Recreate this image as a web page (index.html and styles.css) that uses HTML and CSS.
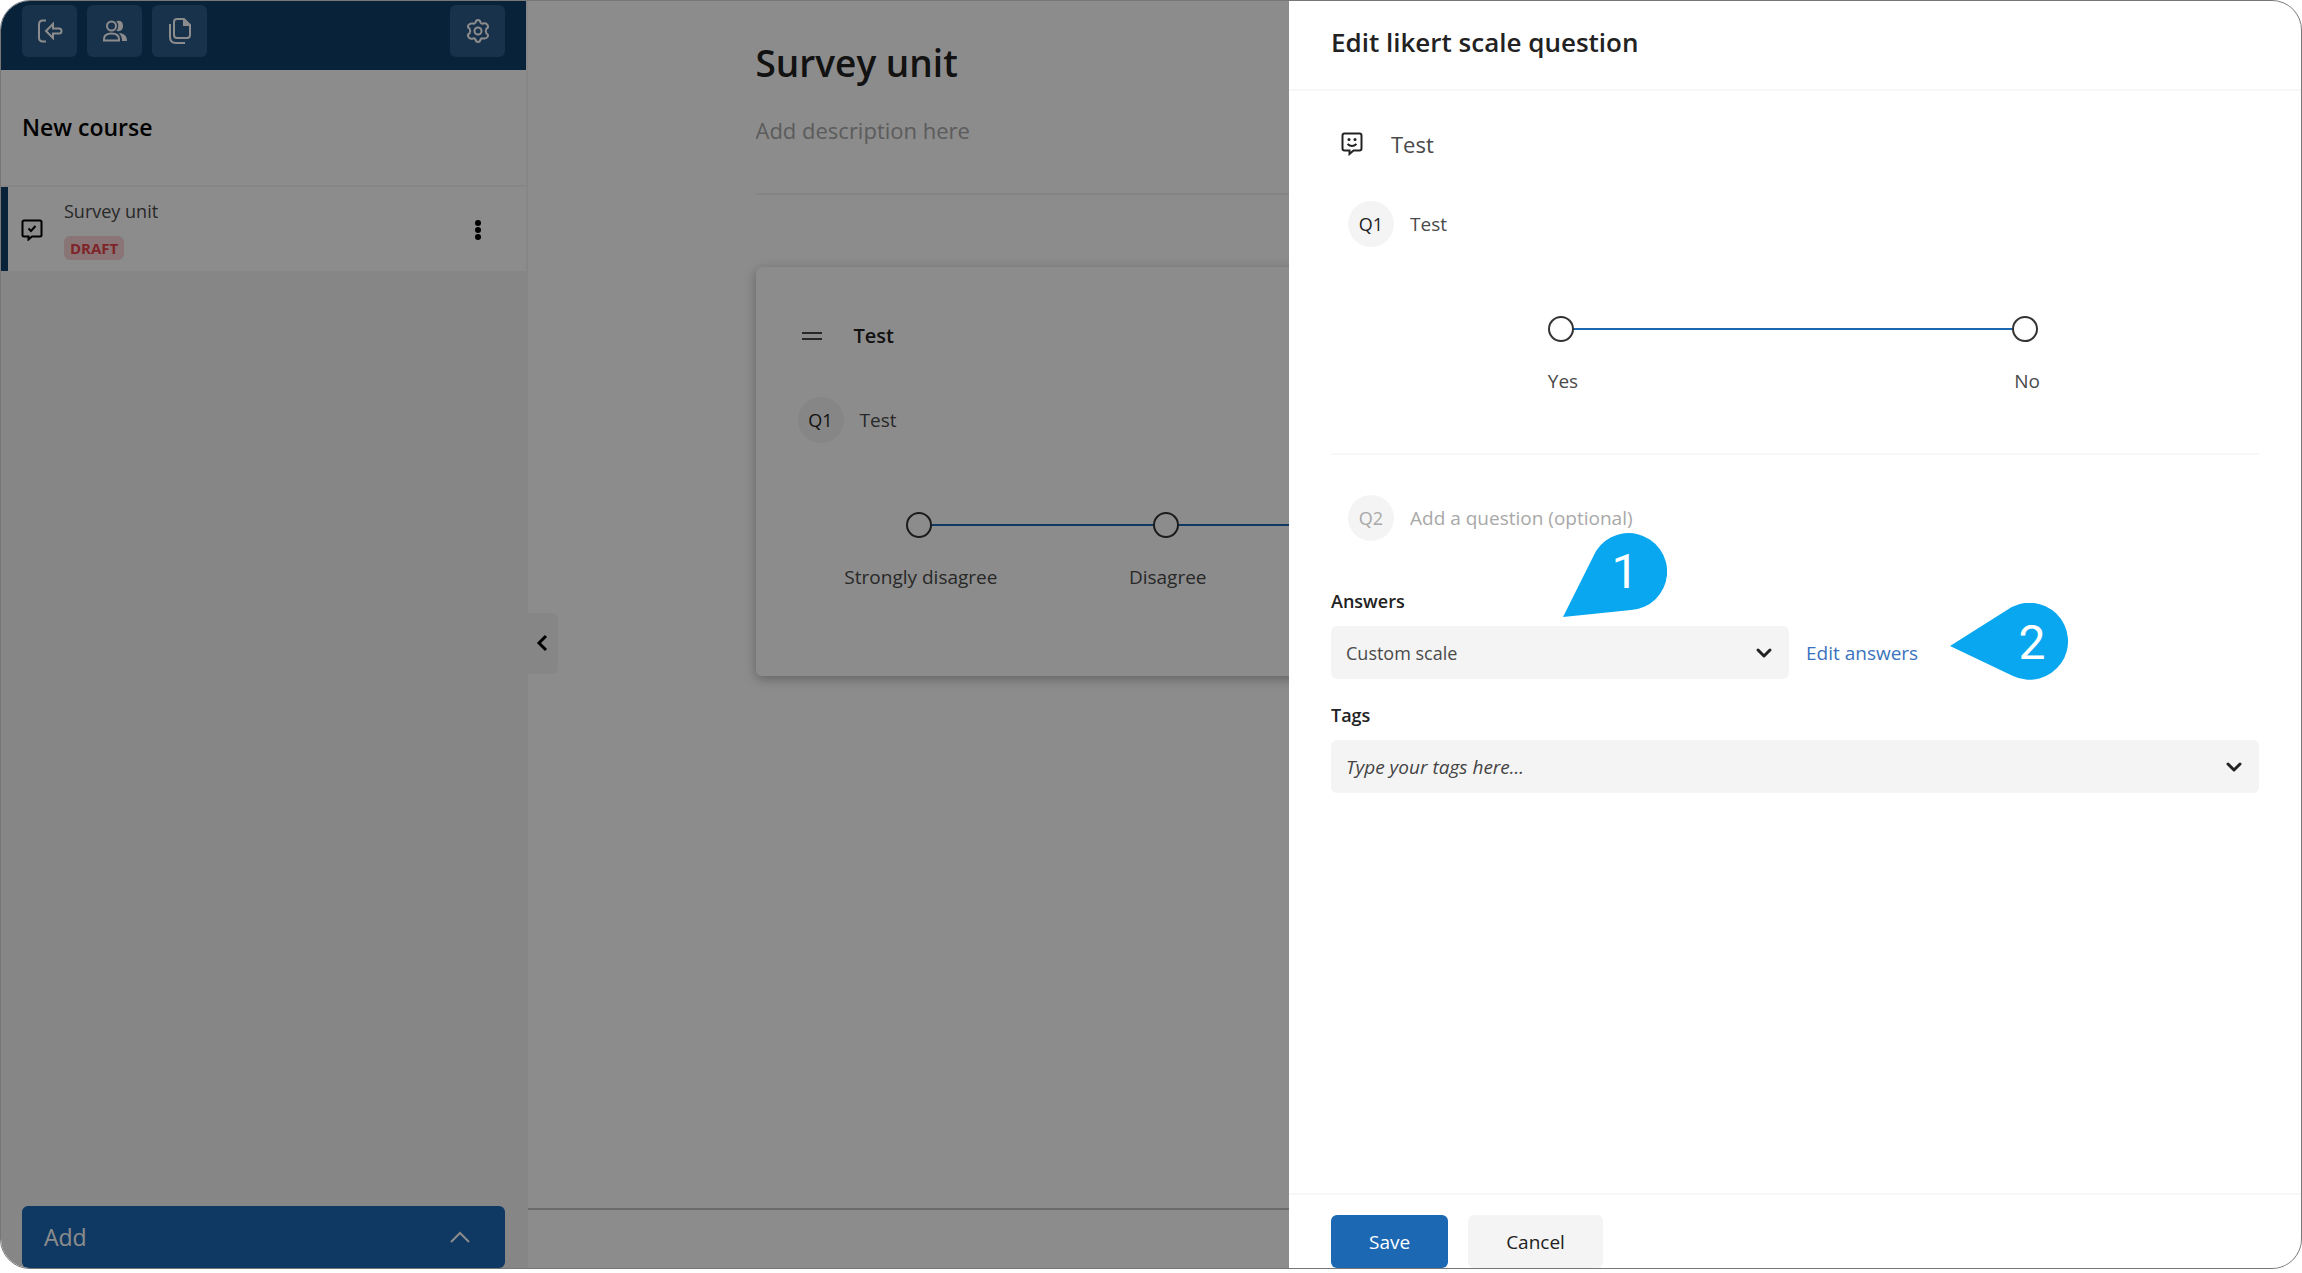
FILE: index.html
```html
<!DOCTYPE html>
<html lang="en">
<head>
    <meta charset="UTF-8">
    <meta name="viewport" content="width=device-width, initial-scale=1.0">
    <title>Survey unit - Edit likert scale question</title>
    <link rel="stylesheet" href="styles.css">
</head>
<body>
    <div class="window">
        <!-- Sidebar -->
        <aside class="sidebar">
            <nav class="toolbar">
                <button class="tool-btn" aria-label="Back">
                    <svg width="26" height="24" viewBox="0 0 26 24">
                        <path d="M9 1.500H6Q2 1.500 2 5.500V18.500Q2 22.500 6 22.500H9"/>
                        <path d="M9 12L16 5V9.500H22Q24.500 9.500 24.500 12T22 14.500H16V19Z"/>
                    </svg>
                </button>
                <button class="tool-btn" aria-label="Users">
                    <svg width="26" height="24" viewBox="0 0 26 24">
                        <circle cx="9.500" cy="7" r="4.500"/>
                        <path d="M2 21.500V20Q2 14.500 9.500 14.500T17 20V21.500Z"/>
                        <path class="solid" d="M14.500 2Q21 1 21 7T14.500 12Q18 7 14.500 2ZM18 14Q25 15 25 22H20Q20 17 17 14Z"/>
                    </svg>
                </button>
                <button class="tool-btn" aria-label="Files">
                    <svg width="24" height="28" viewBox="0 0 24 28">
                        <path d="M9 2H16L22 8V18Q22 21 19 21H9Q6 21 6 18V5Q6 2 9 2Z"/>
                        <path class="solid" d="M15 2L22 9H15Z"/>
                        <path d="M2 7V20Q2 26 8 26H17"/>
                    </svg>
                </button>
                <button class="tool-btn tool-btn-last" aria-label="Settings">
                    <svg width="24" height="26" viewBox="0 0 24 26">
                        <path d="M9.500 4.500Q10 2 12 2T14.500 4.500Q15 6 17 5.500Q20 4.500 21.500 7T20.500 10.500Q19 13 20.500 15.500Q23 17 21.500 19T17 20.500Q15 20 14.500 21.500Q14 24 12 24T9.500 21.500Q9 20 7 20.500Q4 21.500 2.500 19T3.500 15.500Q5 13 3.500 10.500Q1 9 2.500 7T7 5.500Q9 6 9.500 4.500Z"/>
                        <circle cx="12" cy="13" r="3.500"/>
                    </svg>
                </button>
            </nav>
            <h2 class="course-title">New course</h2>
            <div class="unit">
                <svg class="unit-icon" width="22" height="22" viewBox="0 0 22 22">
                    <path d="M3 1.500H19Q20.500 1.500 20.500 3V16Q20.500 17.500 19 17.500H11L7.500 20.500V17.500H3Q1.500 17.500 1.500 16V3Q1.500 1.500 3 1.500ZM7.500 9.500L10 12L14.500 7"/>
                </svg>
                <div class="unit-info">
                    <a class="unit-name" href="#">Survey unit</a>
                    <span class="badge">DRAFT</span>
                </div>
                <button class="more-btn" aria-label="More">
                    <svg width="6" height="20" viewBox="0 0 6 20">
                        <circle cx="3" cy="3" r="3"/>
                        <circle cx="3" cy="10" r="3"/>
                        <circle cx="3" cy="17" r="3"/>
                    </svg>
                </button>
            </div>
            <button class="add-btn">
                Add
                <svg width="20" height="12" viewBox="0 0 20 12"><path d="M1 11L10 2L19 11"/></svg>
            </button>
        </aside>

        <!-- Unit editor -->
        <main class="editor">
            <button class="collapse-btn" aria-label="Collapse sidebar">
                <svg width="12" height="18" viewBox="0 0 12 18"><path d="M10 2L3 9L10 16"/></svg>
            </button>
            <div class="editor-content">
                <h1 class="unit-title">Survey unit</h1>
                <input class="unit-description" type="text" placeholder="Add description here" aria-label="Description">
                <section class="card">
                    <div class="card-title">
                        <svg width="20" height="10" viewBox="0 0 20 10"><path d="M0 2H20M0 8H20"/></svg>
                        <h3>Test</h3>
                    </div>
                    <div class="question">
                        <span class="number">Q1</span>
                        <span>Test</span>
                    </div>
                    <ol class="scale">
                        <li><span class="dot"></span>Strongly disagree</li>
                        <li><span class="dot"></span>Disagree</li>
                        <li><span class="dot"></span>Neutral</li>
                        <li><span class="dot"></span>Agree</li>
                        <li><span class="dot"></span>Strongly agree</li>
                    </ol>
                </section>
            </div>
            <div class="editor-footer"></div>
        </main>

        <div class="overlay"></div>

        <!-- Edit question drawer -->
        <form class="drawer">
            <header class="drawer-header">
                <h2>Edit likert scale question</h2>
            </header>
            <div class="drawer-body">
                <div class="drawer-title">
                    <svg width="22" height="24" viewBox="0 0 22 24">
                        <path d="M3.500 1.500H18.500Q20.500 1.500 20.500 3.500V16.500Q20.500 18.500 18.500 18.500H12.500L8.500 22V18.500H3.500Q1.500 18.500 1.500 16.500V3.500Q1.500 1.500 3.500 1.500ZM6.500 12Q11 16 15.500 12"/>
                        <circle class="eye" cx="8" cy="7.500" r="1.500"/>
                        <circle class="eye" cx="14" cy="7.500" r="1.500"/>
                    </svg>
                    <input type="text" value="Test" aria-label="Title">
                </div>
                <div class="question">
                    <label class="number" for="q1">Q1</label>
                    <input type="text" id="q1" value="Test">
                </div>
                <ol class="scale">
                    <li><span class="dot"></span>Yes</li>
                    <li><span class="dot"></span>No</li>
                </ol>
                <hr>
                <div class="question question-empty">
                    <label class="number" for="q2">Q2</label>
                    <input type="text" id="q2" placeholder="Add a question (optional)">
                </div>

                <label class="field-label" for="answers">Answers</label>
                <div class="field-row">
                    <div class="field field-answers">
                        <select id="answers">
                            <option>Custom scale</option>
                        </select>
                        <svg class="chevron" width="18" height="12" viewBox="0 0 18 12"><path d="M3 3L9 9L15 3"/></svg>
                    </div>
                    <a class="edit-link" href="#">Edit answers</a>

                    <svg class="callout callout-1" width="104" height="86" viewBox="0 0 104 86">
                        <path d="M0 84L30 24A38.500 38.500 0 1 1 68 77Z"/>
                        <text x="62" y="55">1</text>
                    </svg>
                    <svg class="callout callout-2" width="118" height="78" viewBox="0 0 118 78">
                        <path d="M0 43L57 7A38.500 38.500 0 1 1 63 73Z"/>
                        <text x="82" y="56">2</text>
                    </svg>
                </div>

                <label class="field-label" for="tags">Tags</label>
                <div class="field">
                    <input type="text" id="tags" placeholder="Type your tags here...">
                    <svg class="chevron" width="18" height="12" viewBox="0 0 18 12"><path d="M3 3L9 9L15 3"/></svg>
                </div>
            </div>
            <footer class="drawer-footer">
                <button type="submit" class="btn btn-primary">Save</button>
                <button type="button" class="btn">Cancel</button>
            </footer>
        </form>
    </div>
</body>
</html>
```
FILE: styles.css
```css
* {
    margin: 0;
    padding: 0;
    box-sizing: border-box;
}

body {
    font-family: "Open Sans", sans-serif;
    font-size: 19px;
    line-height: 28px;
    color: #4a4a4a;
    background-color: white;
}

button,
input,
select {
    font: inherit;
    color: inherit;
    border: none;
    outline: none;
    background: none;
}

button {
    cursor: pointer;
}

a {
    color: inherit;
    text-decoration: none;
}

svg {
    display: block;
    flex-shrink: 0;
    fill: none;
    stroke: currentColor;
    stroke-width: 2;
}

h1, h2, h3 {
    font-weight: 600;
    color: #222;
}

.window {
    position: relative;
    display: flex;
    height: calc(100vh - 4px);
    border: 1px solid #777;
    border-radius: 30px;
    overflow: hidden;
}

/* Sidebar */
.sidebar {
    display: flex;
    flex-direction: column;
    width: 527px;
    padding-right: 2px;
    background-color: #f4f4f4;
}

.toolbar {
    display: flex;
    gap: 10px;
    padding: 4px 21px 13px;
    background-color: #103e6b;
}

.tool-btn {
    display: flex;
    align-items: center;
    justify-content: center;
    width: 55px;
    height: 52px;
    border-radius: 6px;
    color: white;
    background-color: #2f5b8a;
}

.tool-btn-last {
    margin-left: auto;
}

.tool-btn .solid {
    fill: currentColor;
    stroke: none;
}

.course-title {
    padding: 42px 21px;
    font-size: 23px;
    line-height: 31px;
    color: black;
    background-color: white;
    border-bottom: 2px solid #f4f4f4;
}

.unit {
    display: flex;
    align-items: center;
    gap: 21px;
    padding: 12px 45px 11px 13px;
    background-color: white;
    border-left: 7px solid #103e6b;
}

.unit-icon {
    color: black;
}

.unit-info {
    display: flex;
    flex-direction: column;
    align-items: flex-start;
    gap: 13px;
    flex: 1;
}

.unit-name {
    font-size: 18px;
    line-height: 24px;
}

.badge {
    padding: 0 6px;
    font-size: 15px;
    font-weight: 700;
    line-height: 24px;
    color: #e8434b;
    background-color: #f9d6d8;
    border-radius: 6px;
}

.more-btn svg {
    fill: black;
    stroke: none;
}

.add-btn {
    display: flex;
    align-items: center;
    justify-content: space-between;
    height: 62px;
    margin: auto 21px 0;
    padding: 0 35px 0 22px;
    font-size: 23px;
    color: white;
    background-color: #1c68b3;
    border-radius: 6px;
}

/* Unit editor */
.editor {
    position: relative;
    display: flex;
    flex-direction: column;
    flex: 1;
}

.collapse-btn {
    position: absolute;
    left: 0;
    top: calc(50% - 22px);
    display: flex;
    align-items: center;
    justify-content: center;
    width: 30px;
    height: 61px;
    padding-right: 3px;
    color: black;
    background-color: #f4f4f4;
    border-radius: 0 6px 6px 0;
}

.collapse-btn svg {
    stroke-width: 3;
}

.editor-content {
    flex: 1;
    width: 100%;
    max-width: 1318px;
    margin: 0 auto;
    padding-top: 38px;
}

.unit-title {
    font-size: 37px;
    line-height: 48px;
}

.unit-description {
    display: block;
    width: 100%;
    margin-bottom: 72px;
    padding: 27px 0 47px;
    font-size: 22px;
    line-height: 32px;
    border-bottom: 2px solid #f0f0f0;
}

input::placeholder {
    color: #a8a8a8;
    opacity: 1;
}

.card {
    padding: 55px 42px 85px;
    border-radius: 6px;
    box-shadow: 0 3px 12px rgba(0, 0, 0, 0.3);
}

.card-title {
    display: flex;
    align-items: center;
    gap: 32px;
    margin-bottom: 47px;
    padding-left: 4px;
}

.card-title h3 {
    font-size: 20px;
}

.editor-footer {
    height: 60px;
    border-top: 2px solid #c4c4c4;
}

/* Questions and scales */
.question {
    display: flex;
    align-items: center;
    gap: 16px;
}

.question input {
    flex: 1;
}

.number {
    width: 46px;
    font-size: 18px;
    line-height: 46px;
    text-align: center;
    color: #222;
    background-color: #f4f4f4;
    border-radius: 50%;
}

.question-empty .number {
    color: #a8a8a8;
}

.scale {
    display: flex;
    margin-top: 69px;
    list-style: none;
}

.scale li {
    position: relative;
    display: flex;
    flex-direction: column;
    align-items: center;
    gap: 25px;
    flex: 1;
}

.scale li:not(:last-child)::after {
    content: "";
    position: absolute;
    left: 50%;
    top: 12px;
    width: 100%;
    height: 2px;
    background-color: #1c68b3;
}

.dot {
    z-index: 1;
    width: 26px;
    height: 26px;
    margin-right: 4px;
    background-color: white;
    border: 2px solid #333;
    border-radius: 50%;
}

/* Dimmed layer under the drawer */
.overlay {
    position: absolute;
    inset: 0;
    z-index: 2;
    background-color: rgba(0, 0, 0, 0.45);
}

/* Drawer */
.drawer {
    position: absolute;
    top: 0;
    right: 0;
    bottom: 0;
    z-index: 3;
    display: flex;
    flex-direction: column;
    width: 44%;
    background-color: white;
}

.drawer-header {
    padding: 23px 42px 29px;
    border-bottom: 2px solid #f7f7f7;
}

.drawer-header h2 {
    font-size: 26px;
    line-height: 36px;
}

.drawer-body {
    flex: 1;
    padding: 37px 42px 0;
}

.drawer-title {
    display: flex;
    align-items: center;
    gap: 28px;
    margin-bottom: 41px;
    padding-left: 10px;
}

.drawer-title svg {
    color: #222;
}

.drawer-title .eye {
    fill: currentColor;
    stroke: none;
}

.drawer-title input {
    flex: 1;
    font-size: 22px;
    line-height: 32px;
}

.drawer .question {
    padding-left: 17px;
}

.drawer hr {
    margin: 58px 0 40px;
    border: none;
    border-top: 2px solid #f7f7f7;
}

.field-label {
    display: block;
    margin: 24px 0 13px;
    font-size: 18px;
    font-weight: 600;
    line-height: 24px;
    color: #222;
}

.question-empty + .field-label {
    margin-top: 48px;
}

.field-row {
    position: relative;
    display: flex;
    align-items: center;
    gap: 17px;
}

.field {
    position: relative;
}

.field-answers {
    width: 458px;
}

.field select,
.field input {
    display: block;
    width: 100%;
    height: 53px;
    padding: 0 15px;
    font-size: 18px;
    appearance: none;
    background-color: #f4f4f4;
    border-radius: 6px;
}

.field input {
    font-size: 19px;
}

.field input::placeholder {
    font-style: italic;
    color: #444;
}

.chevron {
    position: absolute;
    right: 16px;
    top: 21px;
    color: #222;
    stroke-width: 3;
    stroke-linecap: round;
    stroke-linejoin: round;
    pointer-events: none;
}

.edit-link {
    color: #3a72bd;
}

.drawer-footer {
    display: flex;
    gap: 20px;
    padding: 20px 42px 0;
    border-top: 2px solid #f7f7f7;
}

.btn {
    height: 53px;
    padding: 0 38px;
    color: #222;
    background-color: #f4f4f4;
    border-radius: 6px;
}

.btn-primary {
    color: white;
    background-color: #1c68b3;
}

/* Numbered callouts */
.callout {
    position: absolute;
    fill: #08a7ef;
    stroke: none;
}

.callout text {
    font-family: Roboto, sans-serif;
    font-size: 48px;
    text-anchor: middle;
    fill: white;
}

.callout-1 {
    left: 232px;
    bottom: 60px;
}

.callout-2 {
    left: 619px;
    top: -23px;
}
```
